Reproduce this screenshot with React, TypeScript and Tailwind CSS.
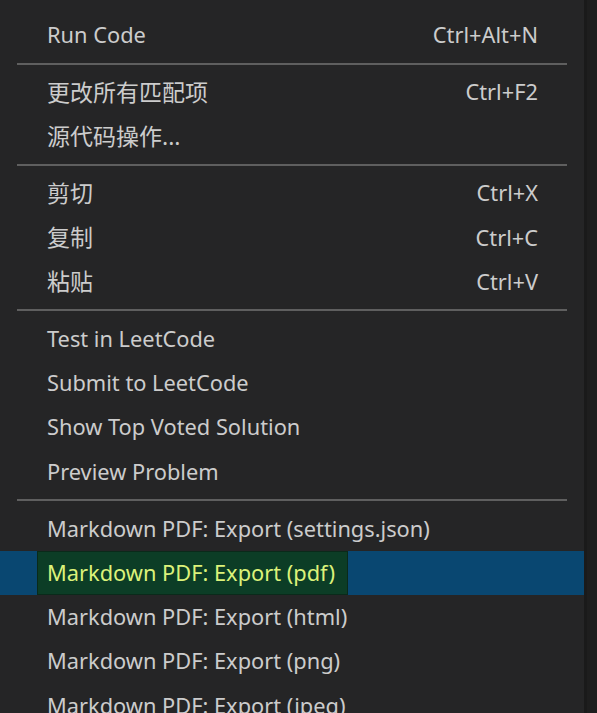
// VS Code style editor context menu

type Entry = { label: string; keys?: string; active?: boolean } | 'sep'

const entries: Entry[] = [
  { label: 'Run Code', keys: 'Ctrl+Alt+N' },
  'sep',
  { label: '更改所有匹配项', keys: 'Ctrl+F2' },
  { label: '源代码操作...' },
  'sep',
  { label: '剪切', keys: 'Ctrl+X' },
  { label: '复制', keys: 'Ctrl+C' },
  { label: '粘贴', keys: 'Ctrl+V' },
  'sep',
  { label: 'Test in LeetCode' },
  { label: 'Submit to LeetCode' },
  { label: 'Show Top Voted Solution' },
  { label: 'Preview Problem' },
  'sep',
  { label: 'Markdown PDF: Export (settings.json)' },
  { label: 'Markdown PDF: Export (pdf)', active: true },
  { label: 'Markdown PDF: Export (html)' },
  { label: 'Markdown PDF: Export (png)' },
  { label: 'Markdown PDF: Export (jpeg)' },
]

const isCjk = (s: string) => /[\u4e00-\u9fff]/.test(s)

function MenuRow({ label, keys, active }: { label: string; keys?: string; active?: boolean }) {
  if (active) {
    return (
      <div className="h-[44.3px] flex items-stretch bg-[#094771]">
        <div className="ml-[37px] flex items-center pl-[9px] pr-[12px] bg-[#0c3d26] border border-[#0a2a1a] text-[#dcf27a]">
          {label}
        </div>
      </div>
    )
  }
  return (
    <div className="h-[44.3px] flex items-center justify-between pl-[47px] pr-[46px] text-[#cccccc]">
      <span className={isCjk(label) ? 'text-[23px]' : ''}>{label}</span>
      {keys && <span>{keys}</span>}
    </div>
  )
}

export default function App() {
  return (
    <div className="w-[597px] h-[713px] overflow-hidden bg-[#1e1e1e] flex">
      <div
        className="w-[587px] h-full bg-[#252526] border-r-[3px] border-[#1a1a1a] pt-[13px] text-[21.8px] leading-none"
        style={{ fontFamily: '"Segoe UI", "Noto Sans", "Noto Sans CJK SC", sans-serif' }}
      >
        {entries.map((e, i) =>
          e === 'sep' ? (
            <div key={i} className="h-[12.6px] flex items-center pl-[17px] pr-[17px]">
              <div className="h-[2px] w-full bg-[#5f5f5f]" />
            </div>
          ) : (
            <MenuRow key={i} {...e} />
          ),
        )}
      </div>
    </div>
  )
}
